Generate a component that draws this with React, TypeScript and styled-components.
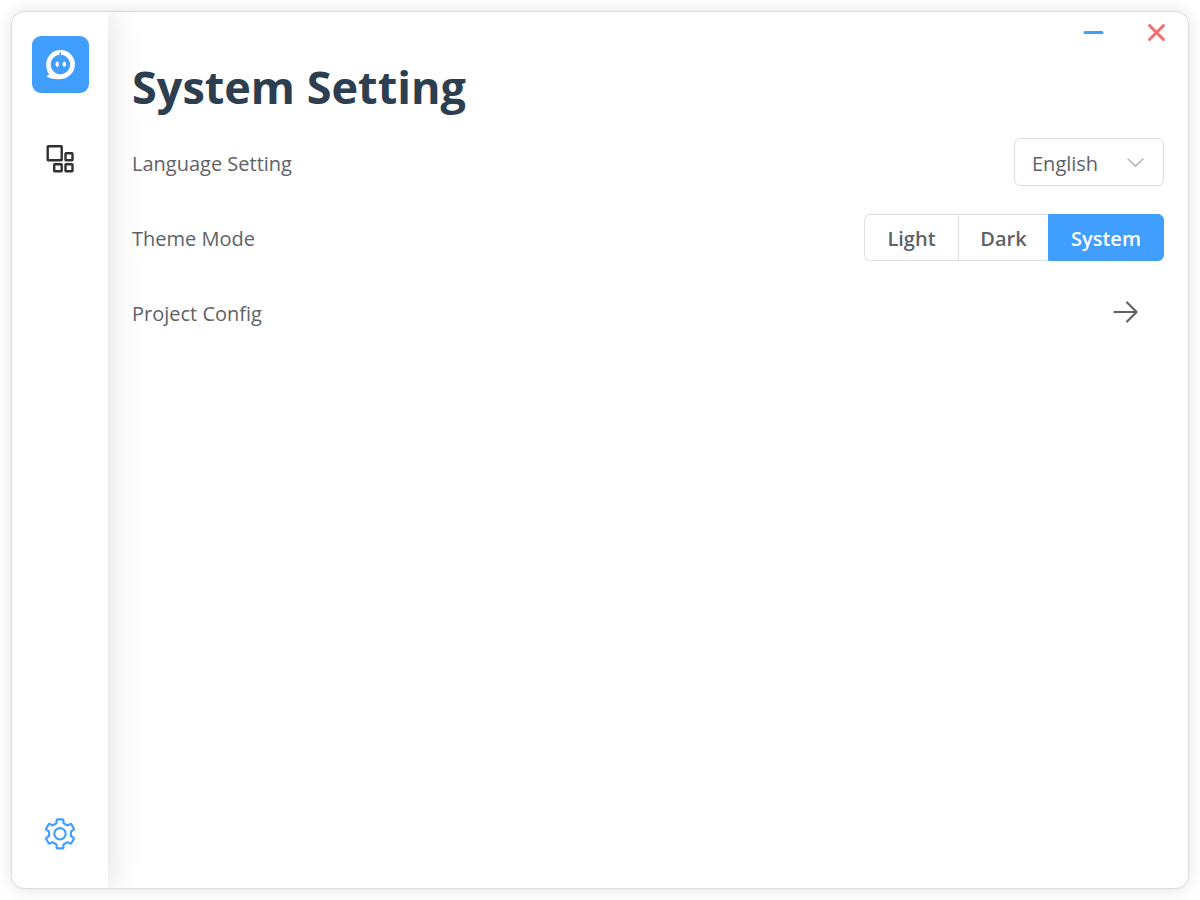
import React, { useState } from "react";
import styled, { createGlobalStyle } from "styled-components";

const GlobalStyle = createGlobalStyle`
  * { box-sizing: border-box; }
  body {
    margin: 0;
    background: #fff;
    font-family: "Segoe UI", "Open Sans", "Noto Sans", sans-serif;
    font-size: 20px;
    color: #606266;
  }
  button, select { font: inherit; color: inherit; }
`;

const Page = styled.div`
  display: flex;
  min-height: 100vh;
  padding: 12px;
`;

const Frame = styled.div`
  display: flex;
  flex: 1;
  overflow: hidden;
  border-radius: 12px;
  background: #fff;
  box-shadow: 0 0 2px rgba(0, 0, 0, 0.3), 0 0 18px rgba(0, 0, 0, 0.12);
`;

const Sidebar = styled.nav`
  display: flex;
  flex-direction: column;
  align-items: center;
  flex: 0 0 96px;
  padding: 24px 0 36px;
  box-shadow: 0 0 36px rgba(0, 0, 0, 0.14);
`;

const Logo = styled.div`
  display: flex;
  align-items: center;
  justify-content: center;
  width: 57px;
  height: 57px;
  border-radius: 9px;
  background: #409eff;
`;

const NavButton = styled.button<{ $active?: boolean; $bottom?: boolean }>`
  display: flex;
  margin: ${(p) => (p.$bottom ? "auto 0 0" : "48px 0 0")};
  padding: 0;
  border: 0;
  background: none;
  color: ${(p) => (p.$active ? "#409eff" : "#303133")};
  cursor: pointer;
`;

const Main = styled.main`
  display: flex;
  flex-direction: column;
  flex: 1;
  padding: 0 24px;
`;

const TitleBar = styled.header`
  display: flex;
  justify-content: flex-end;
  gap: 40px;
  height: 42px;
  margin-right: -4px;
`;

const WindowButton = styled.button<{ $tone: string }>`
  display: flex;
  align-items: center;
  justify-content: center;
  width: 23px;
  height: 42px;
  padding: 0;
  border: 0;
  background: none;
  color: ${(p) => p.$tone};
  cursor: pointer;
`;

const Title = styled.h1`
  margin: 0;
  height: 71px;
  font-size: 45px;
  line-height: 66px;
  font-weight: 700;
  color: #2c3e50;
`;

const Row = styled.div`
  display: flex;
  align-items: center;
  justify-content: space-between;
  height: 75px;
`;

const RowLabel = styled.label`
  padding-top: 2px;
`;

const SelectBox = styled.div`
  display: grid;
  align-items: center;
  width: 150px;
  margin-bottom: 1px;

  select, svg { grid-area: 1 / 1; }
  svg {
    justify-self: end;
    margin-right: 18px;
    color: #a8abb2;
    pointer-events: none;
  }
`;

const Select = styled.select`
  appearance: none;
  width: 100%;
  height: 48px;
  padding: 2px 42px 0 17px;
  border: 1px solid #dcdfe6;
  border-radius: 6px;
  background: #fff;
`;

const Segments = styled.div`
  display: grid;
  grid-template-columns: 94px 90px 116px;
  height: 47px;
`;

const Segment = styled.button<{ $on: boolean }>`
  padding: 2px 0 0;
  border: 1px solid ${(p) => (p.$on ? "#409eff" : "#dcdfe6")};
  border-right-width: 0;
  background: ${(p) => (p.$on ? "#409eff" : "#fff")};
  color: ${(p) => (p.$on ? "#fff" : "#606266")};
  font-weight: 600;
  cursor: pointer;

  &:first-child { border-radius: 6px 0 0 6px; }
  &:last-child { border-radius: 0 6px 6px 0; border-right-width: 1px; }
`;

const ArrowButton = styled.button`
  display: flex;
  margin: 0 21px 1px 0;
  padding: 0;
  border: 0;
  background: none;
  cursor: pointer;
`;

const modes = ["Light", "Dark", "System"];

// Outline of the six-toothed gear, one tooth per 60 degrees around (18, 17.8).
const gearPath =
  [0, 1, 2, 3, 4, 5]
    .map((i) => {
      const a = (i * Math.PI) / 3;
      const at = (x: number, y: number) =>
        `${(18 + x * Math.cos(a) - y * Math.sin(a)).toFixed(2)} ${(17.8 + x * Math.sin(a) + y * Math.cos(a)).toFixed(2)}`;
      return (
        `${i ? "L" : "M"}${at(-4.1, -10.3)}L${at(-3.5, -10.9)}L${at(-3.3, -13.9)}` +
        `Q${at(-3.2, -14.5)} ${at(-2.6, -14.5)}L${at(2.6, -14.5)}Q${at(3.2, -14.5)} ${at(3.3, -13.9)}` +
        `L${at(3.5, -10.9)}L${at(4.1, -10.3)}`
      );
    })
    .join("") + "Z";

export default function App() {
  const [mode, setMode] = useState("System");
  return (
    <Page>
      <GlobalStyle />
      <Frame>
        <Sidebar>
          <Logo>
            <svg width="31" height="31" viewBox="0 0 31 31" aria-hidden="true">
              <path
                fill="#fff"
                fillRule="evenodd"
                d="M15.600 1A14.300 14.300 0 0 1 29.900 15.300C29.900 24 23 30.300 13.500 30.300C8 30.300 3.500 29.300 0.800 26.800C2.300 26.700 3.500 26.200 4 25.200C2 22.500 1.200 19 1.200 15.300A14.400 14.400 0 0 1 15.600 1ZM14.500 5.800A9.700 9.700 0 1 0 20.500 7.200C19 6.100 17.500 5.700 16.200 6.200C15.600 5 16 3.800 16.800 2.800C15 3.300 14 4.400 14.500 5.800Z"
              />
              <ellipse cx="12.200" cy="15.200" rx="1.700" ry="2.700" fill="#fff" />
              <ellipse cx="19.300" cy="15.200" rx="1.700" ry="2.700" fill="#fff" />
            </svg>
          </Logo>
          <NavButton aria-label="Projects">
            <svg width="36" height="36" viewBox="0 0 36 36" fill="none" stroke="currentColor" strokeWidth="2.400" strokeLinejoin="round">
              <rect x="5.700" y="5.200" width="14" height="14" rx="0.500" />
              <rect x="23.500" y="12.200" width="7" height="7" rx="0.500" />
              <rect x="12.200" y="23.200" width="7.500" height="7" rx="0.500" />
              <rect x="23.500" y="23.200" width="7" height="7" rx="0.500" />
            </svg>
          </NavButton>
          <NavButton $active $bottom aria-label="Settings">
            <svg width="36" height="36" viewBox="0 0 36 36" fill="none" stroke="currentColor" strokeWidth="2.200" strokeLinejoin="round">
              <path d={gearPath} />
              <circle cx="18" cy="17.800" r="5.700" />
            </svg>
          </NavButton>
        </Sidebar>
        <Main>
          <TitleBar>
            <WindowButton $tone="#409eff" aria-label="Minimize">
              <svg width="22" height="22" viewBox="0 0 22 22" stroke="currentColor" strokeWidth="3" strokeLinecap="round">
                <path d="M2 10.500H19" />
              </svg>
            </WindowButton>
            <WindowButton $tone="#f56c6c" aria-label="Close">
              <svg width="22" height="22" viewBox="0 0 22 22" stroke="currentColor" strokeWidth="3" strokeLinecap="round">
                <path d="M3.500 3.500L17.500 17.500M17.500 3.500L3.500 17.500" />
              </svg>
            </WindowButton>
          </TitleBar>
          <Title>System Setting</Title>
          <Row>
            <RowLabel htmlFor="language">Language Setting</RowLabel>
            <SelectBox>
              <Select id="language" defaultValue="English">
                <option>English</option>
              </Select>
              <svg width="20" height="20" viewBox="0 0 20 20" fill="none" stroke="currentColor" strokeWidth="1.300" strokeLinecap="round" strokeLinejoin="round">
                <path d="M2 7L9.500 14.300L17 7" />
              </svg>
            </SelectBox>
          </Row>
          <Row>
            <RowLabel as="span" id="theme-mode">Theme Mode</RowLabel>
            <Segments role="group" aria-labelledby="theme-mode">
              {modes.map((m) => (
                <Segment key={m} $on={m === mode} aria-pressed={m === mode} onClick={() => setMode(m)}>
                  {m}
                </Segment>
              ))}
            </Segments>
          </Row>
          <Row>
            <RowLabel as="span" id="project-config">Project Config</RowLabel>
            <ArrowButton aria-labelledby="project-config">
              <svg width="34" height="34" viewBox="0 0 1024 1024" fill="currentColor">
                <path d="M754.752 480H160a32 32 0 1 0 0 64h594.752L521.344 777.344a32 32 0 0 0 45.312 45.312l288-288a32 32 0 0 0 0-45.312l-288-288a32 32 0 1 0-45.312 45.312L754.752 480z" />
              </svg>
            </ArrowButton>
          </Row>
        </Main>
      </Frame>
    </Page>
  );
}
